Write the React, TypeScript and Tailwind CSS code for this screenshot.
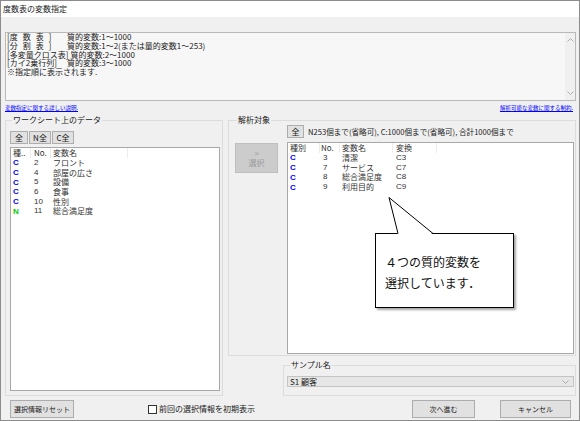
const leftRows = [
  { t: "C", no: "2", name: "フロント" },
  { t: "C", no: "4", name: "部屋の広さ" },
  { t: "C", no: "5", name: "設備" },
  { t: "C", no: "6", name: "食事" },
  { t: "C", no: "10", name: "性別" },
  { t: "N", no: "11", name: "総合満足度" },
];

const rightRows = [
  { t: "C", no: "3", name: "清潔", conv: "C3" },
  { t: "C", no: "7", name: "サービス", conv: "C7" },
  { t: "C", no: "8", name: "総合満足度", conv: "C8" },
  { t: "C", no: "9", name: "利用目的", conv: "C9" },
];

function Chevron({ up }: { up?: boolean }) {
  return (
    <svg width="7" height="4" viewBox="0 0 7 4" className="block">
      <polyline
        points={up ? "0.5,3.5 3.5,0.5 6.5,3.5" : "0.5,0.5 3.5,3.5 6.5,0.5"}
        fill="none"
        stroke="#a6a6a6"
        strokeWidth="0.9"
      />
    </svg>
  );
}

function Btn({ children, className = "" }: { children: React.ReactNode; className?: string }) {
  return (
    <div
      className={`border border-[#adadad] bg-[#e1e1e1] flex items-center justify-center leading-none whitespace-nowrap text-[#1a1a1a] ${className}`}
    >
      {children}
    </div>
  );
}

function TypeMark({ t }: { t: string }) {
  return (
    <span
      className={`font-bold font-['Liberation_Sans',sans-serif] ${
        t === "C" ? "text-[#0000ff]" : "text-[#00cc00]"
      }`}
    >
      {t}
    </span>
  );
}

export default function App() {
  return (
    <div className="w-[580px] h-[421px] border border-[#8c8c8c] flex flex-col relative bg-[#f0f0f0] overflow-hidden font-['Noto_Sans_CJK_JP','Noto_Sans',sans-serif] text-[#1a1a1a]">
      {/* title */}
      <div className="h-[16px] bg-white flex items-center pl-[2px] text-[8px] leading-none">
        度数表の変数指定
      </div>

      <div className="flex-1 flex flex-col pl-[4px] pr-[3px] pt-[15px] pb-[2px] min-h-0">
        {/* description box */}
        <div className="h-[69px] border border-[#b9b9b9] bg-[#f7f7f7] flex">
          <div className="flex-1 pl-[1px] text-[8px] leading-[8.8px] text-[#222]">
            <div className="flex">
              <span className="w-[60px]">
                [<span className="tracking-[5px]">度数表</span>]
              </span>
              <span>質的変数:1～1000</span>
            </div>
            <div className="flex">
              <span className="w-[60px]">
                [<span className="tracking-[5px]">分割表</span>]
              </span>
              <span>質的変数:1～2(または量的変数1～253)</span>
            </div>
            <div className="flex">
              <span>[多変量クロス表]</span>
              <span className="ml-[2px]">質的変数:2～1000</span>
            </div>
            <div className="flex">
              <span className="w-[60px]">[カイ2乗行列]</span>
              <span>質的変数:3～1000</span>
            </div>
            <div>※指定順に表示されます.</div>
          </div>
          <div className="w-[10px] bg-[#f0f0f0] flex flex-col items-center justify-between py-[5px]">
            <Chevron up />
            <Chevron />
          </div>
        </div>

        {/* links */}
        <div className="h-[15px] flex justify-between pt-[4px] pr-[3px] text-[5.5px] leading-[7px] text-[#0000ff] underline">
          <span>変数指定に関する詳しい説明.</span>
          <span>解析可能な変数に関する制約.</span>
        </div>

        {/* main */}
        <div className="flex-1 flex gap-[5px] min-h-0">
          <fieldset className="w-[218px] border border-[#dcdcdc] flex flex-col pl-[4px] pr-[2px] pb-[4px]">
            <legend className="ml-[2px] px-[1px] text-[8px] leading-[8px]">ワークシート上のデータ</legend>
            <div className="flex mt-[7px]">
              <Btn className="w-[18px] h-[13px] text-[8px]">全</Btn>
              <Btn className="w-[22px] h-[13px] ml-[1px] text-[8px]">N全</Btn>
              <Btn className="w-[22px] h-[13px] ml-[1px] text-[8px]">C全</Btn>
            </div>
            <div className="flex-1 mt-[3px] border border-[#a8a8a8] bg-white text-[8px] leading-none">
              <div className="flex h-[10px] items-center text-[#333]">
                <span className="w-[20px] pl-[2px] border-r border-[#ececec] h-full flex items-center">種..</span>
                <span className="w-[20px] pl-[3px] border-r border-[#ececec] h-full flex items-center">No.</span>
                <span className="w-[77px] pl-[2px] border-r border-[#ececec] h-full flex items-center">変数名</span>
              </div>
              {leftRows.map((r) => (
                <div key={r.no} className="flex h-[9.7px] items-center text-[#333]">
                  <span className="w-[20px] pl-[2px]">
                    <TypeMark t={r.t} />
                  </span>
                  <span className="w-[20px] pl-[3px] font-['Liberation_Sans',sans-serif]">{r.no}</span>
                  <span className="pl-[2px]">{r.name}</span>
                </div>
              ))}
            </div>
          </fieldset>

          <div className="flex-1 flex flex-col min-w-0">
            <fieldset className="flex-1 border border-[#dcdcdc] flex pl-[6px] pr-[1px] pb-[1px] mb-[5px] min-h-0">
              <legend className="ml-[2px] px-[1px] text-[8px] leading-[8px]">解析対象</legend>
              <div className="w-[43px] pt-[19px]">
                <div className="h-[30px] border border-[#bfbfbf] bg-[#cccccc] flex flex-col items-center justify-center text-[8px] leading-[9px] text-[#9a9a9a]">
                  <span className="font-['Liberation_Sans',sans-serif]">&gt;</span>
                  <span>選択</span>
                </div>
              </div>
              <div className="flex-1 flex flex-col ml-[9px] min-w-0">
                <div className="flex items-center mt-[1px] h-[13px]">
                  <Btn className="w-[17px] h-[13px] text-[8px]">全</Btn>
                  <span className="ml-[4px] text-[7.6px] leading-none whitespace-nowrap">
                    N253個まで(省略可), C:1000個まで(省略可), 合計1000個まで
                  </span>
                </div>
                <div className="flex-1 mt-[4px] border border-[#a8a8a8] bg-white text-[8px] leading-none">
                  <div className="flex h-[10px] items-center text-[#333]">
                    <span className="w-[32px] pl-[2px] border-r border-[#ececec] h-full flex items-center">種別</span>
                    <span className="w-[20px] pl-[1px] border-r border-[#ececec] h-full flex items-center">No.</span>
                    <span className="w-[53px] pl-[2px] border-r border-[#ececec] h-full flex items-center">変数名</span>
                    <span className="w-[44px] pl-[3px] border-r border-[#ececec] h-full flex items-center">変換</span>
                  </div>
                  {rightRows.map((r) => (
                    <div key={r.no} className="flex h-[9.8px] items-center text-[#333]">
                      <span className="w-[32px] pl-[2px]">
                        <TypeMark t={r.t} />
                      </span>
                      <span className="w-[20px] pl-[3px] font-['Liberation_Sans',sans-serif]">{r.no}</span>
                      <span className="w-[53px] pl-[2px]">{r.name}</span>
                      <span className="pl-[3px] font-['Liberation_Sans',sans-serif]">{r.conv}</span>
                    </div>
                  ))}
                </div>
              </div>
            </fieldset>

            <fieldset className="h-[35px] ml-[55px] border border-[#dcdcdc] pl-[3px] pr-[1px]">
              <legend className="ml-[3px] px-[1px] text-[8px] leading-[8px]">サンプル名</legend>
              <div className="mt-[7px] h-[11px] border border-[#c4c4c4] bg-[#e6e6e6] flex items-center justify-between pl-[2px] pr-[4px] text-[8px] leading-none">
                <span>S1 顧客</span>
                <Chevron />
              </div>
            </fieldset>
          </div>
        </div>

        {/* bottom buttons */}
        <div className="h-[18px] mt-[4px] flex items-center">
          <Btn className="ml-[5px] w-[64px] h-[18px] text-[7px]">選択情報リセット</Btn>
          <div className="ml-[74px] flex items-center">
            <div className="w-[9px] h-[9px] border border-[#333] bg-white" />
            <span className="ml-[2px] text-[8px] leading-none">前回の選択情報を初期表示</span>
          </div>
          <Btn className="ml-auto w-[63px] h-[18px] text-[7px]">次へ進む</Btn>
          <Btn className="ml-[25px] mr-[5px] w-[71px] h-[18px] text-[7px]">キャンセル</Btn>
        </div>
      </div>

      {/* callout */}
      <div className="absolute left-[374px] top-[232px] w-[139px] h-[75px] border border-black bg-white shadow-[2px_2px_2px_rgba(0,0,0,0.35)] pl-[9px] pt-[17px] text-[12px] leading-[21px] text-[#111]">
        <div>４つの質的変数を</div>
        <div>選択しています．</div>
      </div>
      <svg
        className="absolute left-[380px] top-[190px]"
        width="60"
        height="46"
        viewBox="0 0 60 46"
      >
        <polygon points="17,43.5 8,6.5 52,43.5" fill="white" />
        <polyline points="17,42.5 8,6.5 52,42.5" fill="none" stroke="black" strokeWidth="1" />
      </svg>
    </div>
  );
}
